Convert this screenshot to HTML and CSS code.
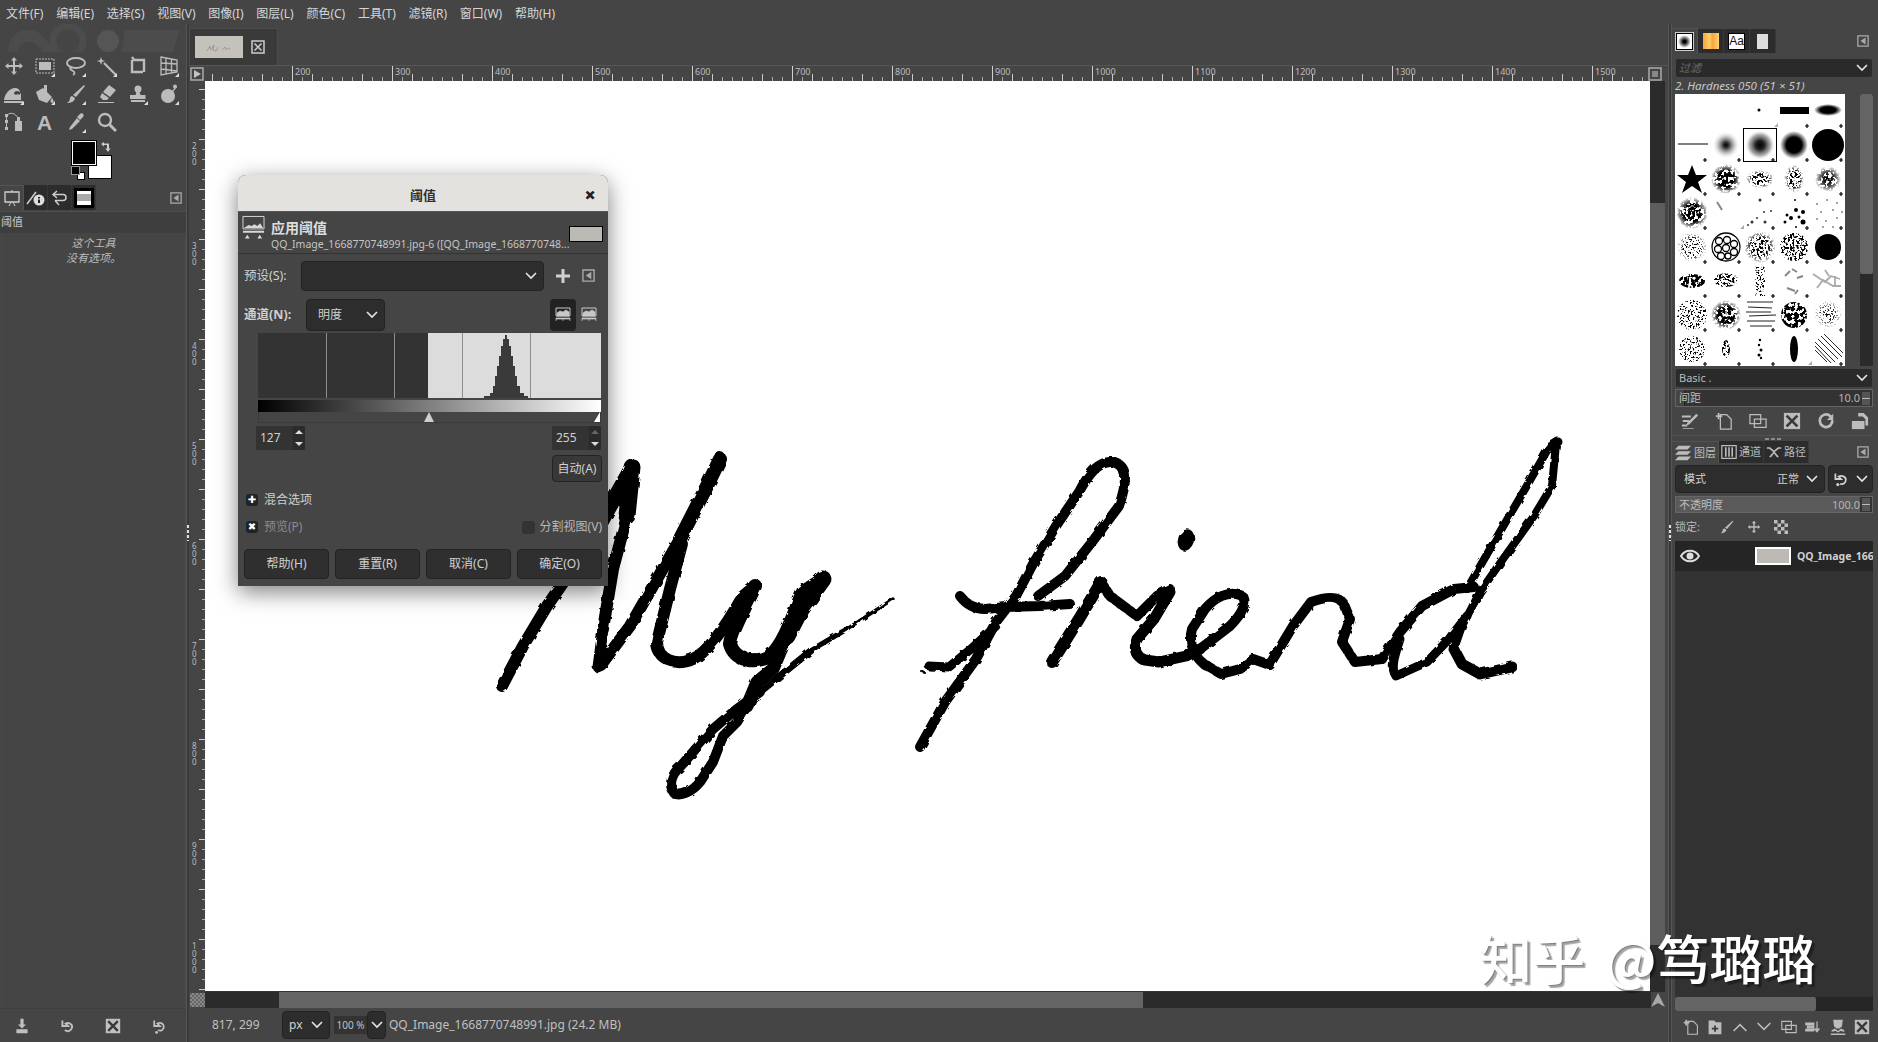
FILE: index.html
```html
<!DOCTYPE html>
<html lang="zh">
<head>
<meta charset="utf-8">
<title>GIMP 阈值</title>
<link rel="stylesheet" href="styles.css">
</head>
<body>
<svg class="defs" width="0" height="0" aria-hidden="true">
  <defs>
    <radialGradient id="soft"><stop offset="0" stop-color="#000"/><stop offset=".2" stop-color="#333"/><stop offset=".55" stop-color="#999" stop-opacity=".7"/><stop offset="1" stop-color="#fff" stop-opacity="0"/></radialGradient>
    <radialGradient id="mid"><stop offset="0" stop-color="#000"/><stop offset=".3" stop-color="#222"/><stop offset=".7" stop-color="#888" stop-opacity=".7"/><stop offset="1" stop-color="#fff" stop-opacity="0"/></radialGradient>
    <radialGradient id="blur"><stop offset="0" stop-color="#000"/><stop offset=".55" stop-color="#000"/><stop offset="1" stop-color="#000" stop-opacity="0"/></radialGradient>
    <filter id="rough"><feTurbulence type="fractalNoise" baseFrequency=".14" numOctaves="2" seed="5"/><feDisplacementMap in="SourceGraphic" scale="3.500"/></filter>
    <filter id="sp1" x="0" y="0" width="1" height="1"><feTurbulence type="fractalNoise" baseFrequency=".45" numOctaves="2" seed="3"/><feColorMatrix values="0 0 0 0 0 0 0 0 0 0 0 0 0 0 0 14 0 0 0 -7"/><feComposite in2="SourceGraphic" operator="in"/></filter>
    <filter id="sp2" x="0" y="0" width="1" height="1"><feTurbulence type="fractalNoise" baseFrequency=".6" numOctaves="2" seed="8"/><feColorMatrix values="0 0 0 0 0 0 0 0 0 0 0 0 0 0 0 14 0 0 0 -7.800"/><feComposite in2="SourceGraphic" operator="in"/></filter>
    <filter id="sp3" x="0" y="0" width="1" height="1"><feTurbulence type="fractalNoise" baseFrequency=".3" numOctaves="2" seed="12"/><feColorMatrix values="0 0 0 0 0 0 0 0 0 0 0 0 0 0 0 14 0 0 0 -6"/><feComposite in2="SourceGraphic" operator="in"/></filter>

    <symbol id="i-move" viewBox="0 0 20 20"><path d="M10 1l3 3.500h-2v4.500h4.500v-2l3.500 3-3.500 3v-2h-4.500v4.500h2l-3 3.500-3-3.500h2v-4.500h-4.500v2l-3.500-3 3.500-3v2h4.500v-4.500h-2z"/></symbol>
    <symbol id="i-rect" viewBox="0 0 20 20"><rect x="1" y="3" width="18" height="14" fill="none" stroke="currentColor" stroke-dasharray="2 1"/><rect x="4" y="6" width="12" height="8"/></symbol>
    <symbol id="i-lasso" viewBox="0 0 20 20"><path d="M10 2c5 0 9 2 9 5s-5 5-9 5-9-2-9-5 4-5 9-5zM5 11c-2 2 0 3 2 4s2 3 0 4" fill="none" stroke="currentColor" stroke-width="1.800"/></symbol>
    <symbol id="i-wand" viewBox="0 0 20 20"><path d="M7 7l12 12" stroke="currentColor" stroke-width="2.200"/><path d="M4 1l1 3 3 1-3 1-1 3-1-3-3-1 3-1z"/></symbol>
    <symbol id="i-crop" viewBox="0 0 20 20"><path d="M4 1l2 3h10v12M4 4v12h11" fill="none" stroke="currentColor" stroke-width="2.400"/></symbol>
    <symbol id="i-grid" viewBox="0 0 20 20"><path d="M2 1l16 3v12L2 19zM7 2v16M12.500 3v14M2 7l16 1M2 13l16 2" fill="none" stroke="currentColor" stroke-width="1.300"/></symbol>
    <symbol id="i-wave" viewBox="0 0 20 20"><path d="M0 16c1-7 6-12 11-12 3 0 5 2 5 4-3-2-6-1-6 2 1 1 3 1 4 0l1 1 2-2v7zM0 17h19v2H0z"/></symbol>
    <symbol id="i-bucket" viewBox="0 0 20 20"><path d="M1 8l7-4 9 9-5 6-8-3zM9 1h3v9H9z"/><path d="M17 14c2 2 2 5 0 5s-2-3 0-5z"/></symbol>
    <symbol id="i-brush" viewBox="0 0 20 20"><path d="M18 1l1 1-9 11-3-2zM6 12l3 2c0 3-4 5-8 5 2-1 3-3 3-5 0-1 1-2 2-2z"/></symbol>
    <symbol id="i-eraser" viewBox="0 0 20 20"><path d="M12 1l7 5-6 7-7-5zM5 9l7 5-2 2H6l-3-3zM1 18h16v1H1z"/></symbol>
    <symbol id="i-stamp" viewBox="0 0 20 20"><circle cx="10" cy="5" r="3.500"/><path d="M8.500 8h3l1 3h5v4H2v-4h5.500zM3 16h14v2H3z"/></symbol>
    <symbol id="i-smudge" viewBox="0 0 20 20"><circle cx="9" cy="12" r="7"/><path d="M13 7l4-5 1 1-4 5z"/><circle cx="16" cy="2.500" r="2"/></symbol>
    <symbol id="i-paths" viewBox="0 0 20 20"><path d="M1 2h3v3H1zM1 8h3v3H1zM1 15h3v3H1zM11 9h7v10h-7zM13 5h3v4h-3z"/><path d="M3 3c4-3 8-2 11 3" fill="none" stroke="currentColor"/><path d="M2.500 5v10" stroke="currentColor"/></symbol>
    <symbol id="i-picker" viewBox="0 0 20 20"><path d="M14 2c2-2 5 1 3 3l-3 3-3-3zM11 6l3 3-8 8-3 1 1-3z"/></symbol>
    <symbol id="i-zoom" viewBox="0 0 20 20"><circle cx="8" cy="8" r="6" fill="none" stroke="currentColor" stroke-width="2.400"/><path d="M12.500 12.500L19 19" stroke="currentColor" stroke-width="3"/></symbol>
    <symbol id="i-config" viewBox="0 0 14 14"><path d="M1 1h12v12H1z" fill="none" stroke="currentColor" stroke-width="1.500"/><path d="M10 3v8L4 7z"/></symbol>
    <symbol id="i-close" viewBox="0 0 14 14"><path d="M1 1h12v12H1z" fill="none" stroke="currentColor" stroke-width="1.500"/><path d="M3.500 3.500l7 7M10.500 3.500l-7 7" stroke="currentColor" stroke-width="1.500"/></symbol>
    <symbol id="i-hist" viewBox="0 0 24 24"><path d="M1 1h22v13H1z" fill="none" stroke="currentColor"/><path d="M2 13l5-3 3 1 3-2 3 2 3-3 3 5zM1 16h22v2H1zM3 24l2.500-4L8 24zM16 24l2.500-4 2.500 4z"/></symbol>
    <symbol id="i-hist2" viewBox="0 0 16 16"><path d="M1 1h14v8H1z" fill="none" stroke="currentColor"/><path d="M2 9V6l3-2 3 1 3-2 3 2v4zM1 11h14v1H1zM1 12v2M8 12v2M15 12v2" stroke="currentColor" stroke-width=".7"/></symbol>
    <symbol id="i-save" viewBox="0 0 20 20"><path d="M8 1h4v7h3l-5 5-5-5h3zM3 14h14v5H3z"/></symbol>
    <symbol id="i-undo" viewBox="0 0 20 20"><path d="M3 3v7h7L7 7c4-2 9 1 8 5s-5 6-9 3" fill="none" stroke="currentColor" stroke-width="2.400"/></symbol>
    <symbol id="i-x" viewBox="0 0 20 20"><path d="M1 1h18v18H1z"/><path d="M4 4l12 12M16 4L4 16" stroke="#3a3a3a" stroke-width="3"/></symbol>
    <symbol id="i-reset" viewBox="0 0 20 20"><path d="M4 3v7h7L8 7c4-2 8 0 8 4s-4 6-7 4" fill="none" stroke="currentColor" stroke-width="2.200"/><circle cx="7" cy="18" r="1.800"/></symbol>
    <symbol id="i-edit" viewBox="0 0 20 20"><path d="M1 4h10v2H1zM2 9h7v2H2zM1 14h6v2H1zM2 18h12v1H2zM17 2l2 2-10 10-3 1 1-3z"/></symbol>
    <symbol id="i-new" viewBox="0 0 20 20"><path d="M6 3h7l5 5v11H6z" fill="none" stroke="currentColor" stroke-width="1.400"/><path d="M4 1v7M1 4.500h7" stroke="currentColor" stroke-width="2"/></symbol>
    <symbol id="i-dup" viewBox="0 0 20 20"><path d="M1 3h12v10H1zM6 8h13v9H6z" fill="none" stroke="currentColor" stroke-width="1.400"/></symbol>
    <symbol id="i-redo" viewBox="0 0 20 20"><path d="M17 9a7 7 0 1 1-3-5l3 3" fill="none" stroke="currentColor" stroke-width="3"/><path d="M18 2v7h-7z"/></symbol>
    <symbol id="i-open" viewBox="0 0 20 20"><path d="M8 1h6l5 5v9h-3V8l-3-3H8z"/><path d="M1 10h14v9H1z"/></symbol>
    <symbol id="i-folder" viewBox="0 0 20 20"><path d="M2 2h7l2 2h7v15H2z"/><path d="M10 8v8M6 12h8" stroke="#3a3a3a" stroke-width="2.200"/></symbol>
    <symbol id="i-up" viewBox="0 0 20 20"><path d="M2 15l8-8 8 8" fill="none" stroke="currentColor" stroke-width="2"/></symbol>
    <symbol id="i-down" viewBox="0 0 20 20"><path d="M2 5l8 8 8-8" fill="none" stroke="currentColor" stroke-width="2"/></symbol>
    <symbol id="i-merge" viewBox="0 0 20 20"><path d="M1 5h10v2H1zM3 9h8v2H3zM1 13h10v2H1zM15 3v12M12 12l3 4 3-4" stroke="currentColor" stroke-width="1.500"/></symbol>
    <symbol id="i-anchor" viewBox="0 0 20 20"><path d="M4 1h12l-1 8-3 3H8L5 9zM2 14l4-2 4 3 4-3 4 2v2l-5-1-3 2-3-2-5 1zM1 18h18v2H1z"/></symbol>
    <symbol id="i-eye" viewBox="0 0 20 14"><path d="M1 7c4-7 14-7 18 0-4 7-14 7-18 0z" fill="none" stroke="currentColor" stroke-width="2"/><circle cx="10" cy="7" r="3.500"/></symbol>
    <symbol id="i-stack" viewBox="0 0 20 20"><path d="M5 2h14l-4 4H1zM5 8h14l-4 4H1zM5 14h14l-4 4H1z"/></symbol>
    <symbol id="i-bars" viewBox="0 0 20 20"><path d="M1 2h18v16H1z" fill="none" stroke="currentColor" stroke-width="1.500"/><path d="M5 4h2v12H5zM9 4h2v12H9zM13 4h2v12h-2z"/></symbol>
    <symbol id="i-path" viewBox="0 0 20 20"><path d="M1 4h4l5 4 5-4h4v2h-3l-5 4 5 6-2 1-4-5-4 5-2-1 5-6-5-4H1z"/></symbol>
    <symbol id="i-reverse" viewBox="0 0 20 20"><path d="M3 3v7h7L7 7c4-2 9 0 9 4s-3 6-7 5" fill="none" stroke="currentColor" stroke-width="2.200"/><circle cx="6" cy="17" r="2"/></symbol>
    <symbol id="i-checks" viewBox="0 0 16 16"><path d="M0 0h4v4H0zM8 0h4v4H8zM4 4h4v4H4zM12 4h4v4h-4zM0 8h4v4H0zM8 8h4v4H8zM4 12h4v4H4zM12 12h4v4h-4z"/></symbol>
    <symbol id="i-chev" viewBox="0 0 12 8"><path d="M1 1l5 5 5-5" fill="none" stroke="currentColor" stroke-width="1.600"/></symbol>
  </defs>
</svg>

<div class="app">
  <nav class="menubar">
    <span>文件(F)</span><span>编辑(E)</span><span>选择(S)</span><span>视图(V)</span><span>图像(I)</span><span>图层(L)</span><span>颜色(C)</span><span>工具(T)</span><span>滤镜(R)</span><span>窗口(W)</span><span>帮助(H)</span>
  </nav>

  <div class="main">
    <aside class="left-dock">
      <div class="wilber">
        <svg viewBox="0 0 186 28" width="186" height="28"><path d="M8 28c0-14 8-22 20-22s18 8 26 22h-12c-2-6-7-10-14-10s-9 4-10 10zM122 28l3-22h54l-6 22z" fill="#4c4c4c"/><circle cx="68" cy="17" r="15" fill="none" stroke="#4c4c4c" stroke-width="7"/><circle cx="108" cy="17" r="11" fill="#555"/></svg>
      </div>
      <div class="tools">
        <div class="tool"><svg class="ic20"><use href="#i-move"/></svg></div>
        <div class="tool more"><svg class="ic20"><use href="#i-rect"/></svg></div>
        <div class="tool more"><svg class="ic20"><use href="#i-lasso"/></svg></div>
        <div class="tool more"><svg class="ic20"><use href="#i-wand"/></svg></div>
        <div class="tool"><svg class="ic20"><use href="#i-crop"/></svg></div>
        <div class="tool more"><svg class="ic20"><use href="#i-grid"/></svg></div>
        <div class="tool more"><svg class="ic20"><use href="#i-wave"/></svg></div>
        <div class="tool more"><svg class="ic20"><use href="#i-bucket"/></svg></div>
        <div class="tool more"><svg class="ic20"><use href="#i-brush"/></svg></div>
        <div class="tool"><svg class="ic20"><use href="#i-eraser"/></svg></div>
        <div class="tool more"><svg class="ic20"><use href="#i-stamp"/></svg></div>
        <div class="tool more"><svg class="ic20"><use href="#i-smudge"/></svg></div>
        <div class="tool"><svg class="ic20"><use href="#i-paths"/></svg></div>
        <div class="tool tool-text">A</div>
        <div class="tool more"><svg class="ic20"><use href="#i-picker"/></svg></div>
        <div class="tool"><svg class="ic20"><use href="#i-zoom"/></svg></div>
      </div>
      <div class="colors">
        <span class="bg-swatch"></span><span class="fg-swatch"></span>
        <span class="mini-bg"></span><span class="mini-fg"></span>
        <svg class="swap" viewBox="0 0 12 12" width="12" height="12"><path d="M1 3l3-2v1.500h5v5H10.500L8 11 5.500 7.500H7V4H4v1.500z"/></svg>
      </div>
      <div class="dock-tabs">
        <div class="dtab active">
          <svg viewBox="0 0 18 16" width="18" height="16"><path d="M2 2h14v10H2z" fill="none" stroke="#cfcfcf" stroke-width="1.300"/><path d="M9 0v2M6 16l2-4M12 16l-2-4" stroke="#cfcfcf"/></svg>
        </div>
        <div class="dtab-group">
          <div class="dtab"><svg viewBox="0 0 20 16" width="20" height="16"><path d="M1 14L10 2" stroke="#ccc" stroke-width="1.500"/><circle cx="13" cy="10" r="5.500" fill="#ddd"/><path d="M12 7h2v1.500h-2zM12 9.500h2V13h-2z" fill="#222"/></svg></div>
          <div class="dtab"><svg viewBox="0 0 18 16" width="18" height="16"><path d="M6 1L2 4.500 6 8M2 4.500h10c4 0 4 6 0 6H4M8 15l-4-4.500" fill="none" stroke="#ccc" stroke-width="1.500"/></svg></div>
          <div class="dtab"><span class="img-thumb"></span></div>
        </div>
        <svg class="cfg"><use href="#i-config"/></svg>
      </div>
      <div class="panel-title">阈值</div>
      <div class="tool-opts">这个工具<br>没有选项。</div>
      <div class="dock-foot">
        <svg class="ic16"><use href="#i-save"/></svg>
        <svg class="ic16"><use href="#i-undo"/></svg>
        <svg class="ic16"><use href="#i-x"/></svg>
        <svg class="ic16"><use href="#i-reset"/></svg>
      </div>
    </aside>
    <div class="sash"><i></i></div>

    <section class="center">
      <div class="tabs">
        <div class="image-tab">
          <span class="tab-thumb"><svg viewBox="0 0 48 22" width="48" height="22"><path d="M12 15l3-5 1 4 3-5-1 5 3 1 2-4M27 14l3-3 1 3 2-2 2 1" fill="none" stroke="#8d8a86" stroke-width=".7"/></svg></span>
          <svg class="tab-close"><use href="#i-close"/></svg>
        </div>
      </div>
      <div class="ruler-row">
        <div class="corner"><svg viewBox="0 0 14 14" width="14" height="14"><path d="M1 1h12v12H1z" fill="none" stroke="#aaa" stroke-width="1.500"/><path d="M4 3v8l7-4z" fill="#c4c4c4"/></svg></div>
        <div class="hruler">
          <span class="lead"></span>
          <span>200</span><span>300</span><span>400</span><span>500</span><span>600</span><span>700</span><span>800</span><span>900</span><span>1000</span><span>1100</span><span>1200</span><span>1300</span><span>1400</span><span>1500</span>
        </div>
        <div class="corner-r"><svg viewBox="0 0 14 14" width="14" height="14"><path d="M1 1h12v12H1z" fill="none" stroke="#aaa" stroke-width="1.500"/><path d="M4 4h6v6H4z" fill="#888"/></svg></div>
      </div>
      <div class="canvas-row">
        <div class="vruler">
          <span class="lead"></span>
          <span>2<br>0<br>0</span><span>3<br>0<br>0</span><span>4<br>0<br>0</span><span>5<br>0<br>0</span><span>6<br>0<br>0</span><span>7<br>0<br>0</span><span>8<br>0<br>0</span><span>9<br>0<br>0</span><span>1<br>0<br>0<br>0</span>
        </div>
        <div class="canvas">
          <svg class="ink" viewBox="205 82 1445 910" role="img" aria-label="手写笔迹 My friend">
            <g fill="none" stroke="#000" stroke-linecap="round" stroke-linejoin="round" filter="url(#rough)">
              <!-- M -->
              <path stroke-width="12" d="M502 687L523 647L547 607L567 578"/>
              <path stroke-width="15" d="M567 578L600 525L632 468"/>
              <path stroke-width="17" d="M632 468L627 517"/>
              <path stroke-width="12" d="M627 517L613 570L603 630"/>
              <path stroke-width="11" d="M603 630L598 668"/>
              <path stroke-width="12" d="M601 666L630 627L657 580L680 540"/>
              <path stroke-width="14" d="M680 540L707 487L720 460"/>
              <path stroke-width="12" d="M682 545L670 590L657 643C657 660 675 668 693 660C710 652 730 620 743 597L755 587"/>
              <!-- y -->
              <path stroke-width="14" d="M755 587C745 610 732 630 730 645C735 662 755 665 770 657C785 645 795 610 803 593L823 580"/>
              <path stroke-width="17" d="M823 580L800 612L787 637"/>
              <path stroke-width="13" d="M787 637L773 670L757 683L747 707"/>
              <path stroke-width="10" d="M747 707L737 723L723 737L713 763L700 783C692 793 680 798 674 794C668 785 672 775 680 768L693 753L713 730L733 713L760 693"/>
              <path stroke-width="7" d="M760 693L813 650"/>
              <path stroke-width="5" d="M813 650L847 630"/>
              <path stroke-width="3.500" d="M847 630L893 600"/>
              <!-- f -->
              <path stroke-width="10" d="M920 748L945 703L976 660L996 623"/>
              <path stroke-width="10" d="M996 623L1016 597L1034 563L1056 527L1079 493C1090 472 1100 462 1112 463C1128 466 1128 480 1119 507L1092 543L1065 577L1038 597"/>
              <path stroke-width="10" d="M960 597C966 605 974 610 985 610L1007 608L1040 607L1070 605"/>
              <path stroke-width="9" d="M929 667L949 668L971 650L996 627"/>
              <!-- r -->
              <path stroke-width="12" d="M1052 663L1079 620L1101 583"/>
              <path stroke-width="10" d="M1101 583L1110 597L1137 617L1157 597L1170 590"/>
              <!-- i -->
              <path stroke-width="11" d="M1170 593L1154 620L1137 640C1133 652 1137 658 1145 661L1159 663L1186 657L1200 650"/>
              <!-- e -->
              <path stroke-width="10" d="M1200 650L1230 627C1242 615 1250 600 1240 596C1228 592 1215 598 1205 610L1192 630C1188 645 1195 658 1204 665L1221 675L1240 670L1253 660L1270 666"/>
              <!-- n -->
              <path stroke-width="10" d="M1270 665L1293 627L1311 603C1325 598 1338 596 1344 605L1350 620L1342 643L1355 663L1382 660"/>
              <!-- d -->
              <path stroke-width="10" d="M1382 660L1400 633L1422 607L1454 590L1474 588"/>
              <path stroke-width="9" d="M1400 640C1395 655 1390 670 1396 677L1427 663L1449 640L1467 617"/>
              <path stroke-width="8" d="M1467 590L1494 543L1525 490L1548 450"/>
              <path stroke-width="9" d="M1550 448L1558 443"/>
              <path stroke-width="8" d="M1556 445L1552 487L1534 517L1503 560L1480 593L1462 627L1454 650"/>
              <path stroke-width="11" d="M1454 650L1462 665L1480 675L1512 668"/>
              <ellipse cx="1186" cy="541" rx="8" ry="11" fill="#000" stroke="none" transform="rotate(18 1186 541)"/>
              <path stroke-width="2" d="M921 672l4 2"/>
            </g>
          </svg>
          <div class="watermark"><span>知乎 @笃璐璐</span></div>
        </div>
        <div class="vscroll"><span class="vthumb"></span></div>
      </div>
      <div class="hscroll-row">
        <div class="qmask"></div>
        <div class="hscroll"><span class="hthumb"></span></div>
        <svg class="nav" viewBox="0 0 16 16" width="16" height="16"><path d="M8 1l7 14-7-4-7 4z" fill="#a8a8a8"/></svg>
      </div>
      <div class="status">
        <span class="coords">817, 299</span>
        <div class="combo c-unit"><span>px</span><svg class="chev"><use href="#i-chev"/></svg></div>
        <span class="zoom-val">100 %</span>
        <div class="combo c-zoom"><svg class="chev"><use href="#i-chev"/></svg></div>
        <span class="status-name">QQ_Image_1668770748991.jpg (24.2 MB)</span>
      </div>
    </section>
    <div class="sash sash-r"><i></i></div>

    <aside class="right-dock">
      <div class="dock-tabs r">
        <div class="dtab active"><span class="tab-brush"><i></i></span></div>
        <div class="dtab-group">
          <div class="dtab"><span class="tab-grad"></span></div>
          <div class="dtab"><span class="tab-font">Aa</span></div>
          <div class="dtab"><span class="tab-doc"></span></div>
        </div>
        <svg class="cfg"><use href="#i-config"/></svg>
      </div>
      <div class="filter">过滤<svg class="chev"><use href="#i-chev"/></svg></div>
      <div class="brush-name">2. Hardness 050 (51 × 51)</div>
      <div class="brush-wrap">
        <svg class="brushes" viewBox="0 0 170 272" width="170" height="272" role="img" aria-label="笔刷">
          <!-- row 0 -->
          <circle cx="84" cy="16" r="1.500"/>
          <rect x="105" y="13" width="29" height="7"/>
          <ellipse cx="153" cy="16" rx="14" ry="6" fill="url(#blur)"/>
          <!-- row 1 -->
          <path d="M3 50h30" stroke="#000"/>
          <circle cx="51" cy="51" r="14" fill="url(#soft)"/>
          <circle cx="85" cy="51" r="15" fill="url(#mid)"/>
          <circle cx="119" cy="51" r="14" fill="url(#blur)"/>
          <circle cx="153" cy="51" r="16"/>
          <rect x="68.500" y="34.500" width="33" height="33" fill="none" stroke="#000"/>
          <!-- row 2 -->
          <path d="M17 71l4 10 11 0-9 7 4 11-10-7-10 7 4-11-9-7 11 0z"/>
          <circle cx="51" cy="85" r="15" fill="url(#blur)" filter="url(#sp3)"/>
          <ellipse cx="85" cy="85" rx="14" ry="9" fill="url(#blur)" filter="url(#sp1)"/>
          <ellipse cx="119" cy="85" rx="10" ry="14" fill="url(#blur)" filter="url(#sp1)"/>
          <circle cx="153" cy="85" r="13" fill="url(#soft)" filter="url(#sp3)"/>
          <!-- row 3 -->
          <circle cx="17" cy="119" r="16" fill="url(#blur)" filter="url(#sp3)"/>
          <path d="M42 108l5 8" stroke="#888" stroke-width="2"/>
          <g fill="#333"><circle cx="85" cy="106" r="1.500"/><circle cx="89" cy="118" r="1"/><circle cx="96" cy="117" r="1"/><circle cx="82" cy="124" r="1"/><circle cx="77" cy="128" r="1.500"/><circle cx="90" cy="128" r="1.500"/><circle cx="73" cy="131" r="1"/></g>
          <g><circle cx="120" cy="106" r="1"/><circle cx="121" cy="116" r="2"/><circle cx="128" cy="118" r="2"/><circle cx="112" cy="121" r="1.500"/><circle cx="116" cy="124" r="2"/><circle cx="124" cy="123" r="1.500"/><circle cx="128" cy="128" r="2.500"/><circle cx="121" cy="133" r="1"/><circle cx="110" cy="128" r="1.500"/></g>
          <g><circle cx="142" cy="110" r=".7"/><circle cx="152" cy="106" r=".7"/><circle cx="162" cy="109" r=".7"/><circle cx="146" cy="118" r=".7"/><circle cx="158" cy="116" r=".7"/><circle cx="167" cy="118" r=".7"/><circle cx="142" cy="125" r=".7"/><circle cx="151" cy="127" r=".7"/><circle cx="162" cy="124" r=".7"/><circle cx="148" cy="133" r=".7"/><circle cx="158" cy="133" r=".7"/></g>
          <!-- row 4 -->
          <circle cx="17" cy="153" r="15" fill="url(#blur)" filter="url(#sp2)"/>
          <g fill="none" stroke="#000" stroke-width="1.300"><circle cx="51" cy="153" r="14"/><circle cx="44" cy="147" r="3.500"/><circle cx="52" cy="146" r="3.500"/><circle cx="59" cy="150" r="3.500"/><circle cx="43" cy="155" r="3.500"/><circle cx="51" cy="154" r="3.500"/><circle cx="59" cy="158" r="3.500"/><circle cx="46" cy="162" r="3.500"/><circle cx="53" cy="162" r="3"/></g>
          <circle cx="85" cy="153" r="16" fill="url(#blur)" filter="url(#sp1)"/>
          <circle cx="119" cy="153" r="14" filter="url(#sp1)"/>
          <circle cx="153" cy="153" r="13"/><ellipse cx="153" cy="158" rx="12" ry="7" fill="#fff" filter="url(#sp1)"/>
          <!-- row 5 -->
          <ellipse cx="17" cy="187" rx="13" ry="7" filter="url(#sp3)"/>
          <ellipse cx="51" cy="186" rx="12" ry="7" fill="#555" filter="url(#sp1)"/>
          <rect x="80" y="172" width="10" height="30" fill="#555" filter="url(#sp2)"/>
          <g stroke="#888" stroke-width="2"><path d="M110 182l5-5M122 178l-5-3M128 182l-6 2M112 194l8 3M123 196l-3 4"/></g>
          <g stroke="#aaa" stroke-width="1.800" fill="none"><path d="M138 180l12 8 6-6 9 3M142 194l6-8 10 6 8 0M150 176l4 6M160 182v10"/></g>
          <!-- row 6 -->
          <circle cx="17" cy="221" r="15" fill="#444" filter="url(#sp2)"/>
          <circle cx="51" cy="221" r="15" fill="url(#blur)" filter="url(#sp3)"/>
          <g stroke="#222"><path d="M72 208h26M73 213l24 1M71 218h25M74 222l27-1M72 227h28M75 232h22"/></g>
          <circle cx="119" cy="221" r="13" filter="url(#sp3)"/>
          <circle cx="153" cy="220" r="14" fill="url(#soft)" filter="url(#sp2)"/>
          <!-- row 7 -->
          <circle cx="17" cy="255" r="13" fill="#777" filter="url(#sp2)"/>
          <ellipse cx="51" cy="255" rx="4" ry="9" fill="#666" filter="url(#sp1)"/>
          <g><circle cx="85" cy="246" r="1.200"/><circle cx="84" cy="251" r="1.200"/><circle cx="86" cy="256" r="1.500"/><circle cx="84" cy="261" r="1.500"/><circle cx="86" cy="264" r="1.200"/></g>
          <ellipse cx="119" cy="255" rx="4" ry="13"/>
          <g stroke="#111" stroke-width=".9"><path d="M140 248l20 20M143 245l20 20M146 242l21 21M149 240l19 19M140 252l16 17M140 256l12 12"/></g>
          <!-- plus marks -->
          <g class="plus"><path d="M132 30v4M130 32h4M166 30v4M164 32h4"/><path d="M30 64v4M28 66h4M64 64v4M62 66h4M98 64v4M96 66h4M132 64v4M130 66h4M166 64v4M164 66h4"/><path d="M30 98v4M28 100h4M64 98v4M62 100h4M98 98v4M96 100h4M132 98v4M130 100h4M166 98v4M164 100h4"/><path d="M30 132v4M28 134h4M98 132v4M96 134h4M132 132v4M130 134h4M166 132v4M164 134h4"/><path d="M30 166v4M28 168h4M64 166v4M62 168h4M98 166v4M96 168h4M132 166v4M130 168h4M166 166v4M164 168h4"/><path d="M30 200v4M28 202h4M64 200v4M62 202h4M98 200v4M96 202h4M132 200v4M130 202h4M166 200v4M164 202h4"/><path d="M30 234v4M28 236h4M64 234v4M62 236h4M98 234v4M96 236h4M132 234v4M130 236h4M166 234v4M164 236h4"/><path d="M30 268v4M28 270h4M64 268v4M62 270h4M98 268v4M96 270h4M166 268v4M164 270h4"/></g>
          <path d="M99 33l4-4v4zM65 135l4-4v4zM133 271l4-4v4z" fill="#aab"/>
        </svg>
        <div class="brush-scroll"><span></span></div>
      </div>
      <div class="filter basic">Basic .<svg class="chev"><use href="#i-chev"/></svg></div>
      <div class="slider spacing"><span>间距</span><em>10.0</em><b class="updown"></b></div>
      <div class="icon-row">
        <svg class="ic18"><use href="#i-edit"/></svg>
        <svg class="ic18"><use href="#i-new"/></svg>
        <svg class="ic18"><use href="#i-dup"/></svg>
        <svg class="ic18"><use href="#i-x"/></svg>
        <svg class="ic18"><use href="#i-redo"/></svg>
        <svg class="ic18"><use href="#i-open"/></svg>
      </div>
      <div class="grip"><i></i><i></i><i></i></div>
      <div class="dock-tabs r2">
        <div class="dtab active wide"><svg class="ic18"><use href="#i-stack"/></svg><span>图层</span></div>
        <div class="dtab-group">
          <div class="dtab wide"><svg class="ic16"><use href="#i-bars"/></svg><span>通道</span></div>
          <div class="dtab wide"><svg class="ic16"><use href="#i-path"/></svg><span>路径</span></div>
        </div>
        <svg class="cfg"><use href="#i-config"/></svg>
      </div>
      <div class="mode-row">
        <div class="combo mode"><span>模式</span><span class="mode-val">正常</span><svg class="chev"><use href="#i-chev"/></svg></div>
        <div class="combo rev"><svg class="ic16"><use href="#i-reverse"/></svg><svg class="chev"><use href="#i-chev"/></svg></div>
      </div>
      <div class="slider opacity"><span>不透明度</span><em>100.0</em><b class="updown"></b></div>
      <div class="lock-row">
        <span>锁定:</span>
        <svg class="ic14"><use href="#i-brush"/></svg>
        <svg class="ic14"><use href="#i-move"/></svg>
        <svg class="ic14"><use href="#i-checks"/></svg>
      </div>
      <div class="layers">
        <div class="layer">
          <svg class="eye"><use href="#i-eye"/></svg>
          <span class="layer-thumb"></span>
          <span class="layer-name">QQ_Image_1668</span>
        </div>
      </div>
      <div class="rhscroll"><span></span></div>
      <div class="icon-row foot">
        <svg class="ic16"><use href="#i-new"/></svg>
        <svg class="ic16"><use href="#i-folder"/></svg>
        <svg class="ic16"><use href="#i-up"/></svg>
        <svg class="ic16"><use href="#i-down"/></svg>
        <svg class="ic16"><use href="#i-dup"/></svg>
        <svg class="ic16"><use href="#i-merge"/></svg>
        <svg class="ic16"><use href="#i-anchor"/></svg>
        <svg class="ic16"><use href="#i-x"/></svg>
      </div>
    </aside>
  </div>

  <div class="dialog">
    <header class="dlg-title"><span>阈值</span><b>×</b></header>
    <div class="dlg-head">
      <svg class="dlg-ic"><use href="#i-hist"/></svg>
      <div class="dlg-heading">
        <strong>应用阈值</strong>
        <small>QQ_Image_1668770748991.jpg-6 ([QQ_Image_1668770748...</small>
      </div>
      <span class="dlg-thumb"></span>
    </div>
    <div class="dlg-row presets">
      <label>预设(S):</label>
      <div class="combo preset-combo"><svg class="chev"><use href="#i-chev"/></svg></div>
      <svg class="plus-ic" viewBox="0 0 14 14" width="14" height="14"><path d="M5.500 0h3v5.500H14v3H8.500V14h-3V8.500H0v-3h5.500z"/></svg>
      <svg class="cfg dlg-cfg"><use href="#i-config"/></svg>
    </div>
    <div class="dlg-row channel">
      <label>通道(N):</label>
      <div class="combo chan-combo"><span>明度</span><svg class="chev"><use href="#i-chev"/></svg></div>
      <div class="hist-btns">
        <span class="hbtn on"><svg class="ic16"><use href="#i-hist2"/></svg></span>
        <span class="hbtn"><svg class="ic16"><use href="#i-hist2"/></svg></span>
      </div>
    </div>
    <div class="hist-wrap">
      <svg class="hist" viewBox="0 0 343 65" width="343" height="65" role="img" aria-label="直方图">
        <rect width="343" height="65" fill="#dcdcdc"/>
        <rect width="170" height="65" fill="#333"/>
        <path d="M68.500 0v65M136.500 0v65M204.500 0v65M272.500 0v65" stroke="#8e8e8e"/>
        <path d="M226 65V63H232V60H235V53H237V43H239V33H241V23H243V13H245V6H247V2H249V6H251V13H253V23H255V33H257V43H259V53H262V60H266V63H270V65z" fill="#3a3a3a"/>
      </svg>
      <div class="ramp"></div>
      <div class="handles">
        <svg class="h1" viewBox="0 0 10 10" width="10" height="10"><path d="M5 0l5 10H0z" fill="#ccc"/><path d="M5 2l3.800 7.500H1.200z"/></svg>
        <svg class="h2" viewBox="0 0 6 10" width="6" height="10"><path d="M6 0v10H0z" fill="#fff"/></svg>
      </div>
    </div>
    <div class="spins">
      <div class="spin"><span>127</span><i class="arrows"></i></div>
      <div class="spin"><span>255</span><i class="arrows off"></i></div>
    </div>
    <div class="auto-row"><button class="btn auto">自动(A)</button></div>
    <div class="check-row first"><span class="cb">✚</span><span>混合选项</span></div>
    <div class="check-row second">
      <span class="cb">✖</span><span class="dim">预览(P)</span>
      <span class="cb empty"></span><span class="dim split">分割视图(V)</span>
    </div>
    <div class="actions">
      <button class="btn">帮助(H)</button>
      <button class="btn">重置(R)</button>
      <button class="btn">取消(C)</button>
      <button class="btn">确定(O)</button>
    </div>
  </div>
</div>
</body>
</html>
```
FILE: styles.css
```css
* { box-sizing: border-box; }
html, body { margin: 0; height: 100%; }
body { background: #454545; overflow: hidden; color: #c8c8c8; font: 11px/14px "Noto Sans", "Noto Sans CJK SC", sans-serif; }
.defs { position: absolute; }
svg { display: block; fill: currentColor; }
button { font: inherit; color: inherit; }

.app { position: relative; width: 1878px; height: 1042px; display: flex; flex-direction: column; }

.menubar { height: 24px; flex: none; display: flex; align-items: center; padding: 4px 0 0 6px; gap: 12.700px; font-size: 12px; color: #d6d6d6; }
.main { flex: 1; display: flex; min-height: 0; }

/* left dock */
.left-dock { width: 186px; flex: none; display: flex; flex-direction: column; color: #bcbcbc; }
.wilber { height: 28px; }
.tools { display: grid; grid-template-columns: repeat(6, 31px); grid-auto-rows: 28px; margin-left: -2px; }
.tool { position: relative; display: flex; align-items: center; justify-content: center; }
.tool.more::after { content: ""; position: absolute; right: 5px; bottom: 3px; border: 2px solid transparent; border-right-color: #ddd; border-bottom-color: #ddd; }
.tool-text { font: bold 21px/1 "Liberation Sans", sans-serif; }
.ic20 { width: 20px; height: 20px; }
.ic18 { width: 18px; height: 18px; }
.ic16 { width: 16px; height: 16px; }
.ic14 { width: 14px; height: 14px; }

.colors { position: relative; height: 49px; }
.colors span { position: absolute; display: block; border: 1px solid #000; }
.fg-swatch { left: 72px; top: 5px; width: 24px; height: 24px; background: #000; outline: 1px solid #000; outline-offset: 0; border-color: #fff !important; }
.bg-swatch { left: 88px; top: 19px; width: 24px; height: 24px; background: #fff; }
.mini-fg { left: 72px; top: 31px; width: 7px; height: 7px; background: #000; outline: 1px solid #999; }
.mini-bg { left: 77px; top: 36px; width: 8px; height: 8px; background: #fff; }
.swap { position: absolute; left: 100px; top: 5px; color: #ccc; }

.dock-tabs { display: flex; align-items: center; height: 25px; position: relative; }
.dtab { height: 25px; display: flex; align-items: center; justify-content: center; width: 24px; }
.dtab.active { border: 1px solid #525252; border-bottom: 0; border-left: 0; }
.dtab-group { display: flex; background: #2c2c2c; height: 25px; }
.dtab-group .dtab { border-right: 1px solid #383838; }
.img-thumb { display: block; width: 18px; height: 18px; border: 2px solid #000; outline: 1px solid #000; background: linear-gradient(#fff 0 20%, #aaa 20% 75%, #fff 75%); }
.cfg { width: 12px; height: 12px; margin-left: auto; margin-right: 4px; color: #aaa; }
.panel-title { height: 22px; margin-top: 1px; line-height: 19px; padding-left: 1px; font-size: 11px; background: #3e3e3e; border-top: 1px solid #4e4e4e; color: #c6c6c6; }
.tool-opts { flex: 1; text-align: center; font-style: italic; font-size: 11px; line-height: 15px; padding-top: 2px; color: #bdbdbd; border-left: 1px solid #4a4a4a; border-right: 1px solid #4a4a4a; margin-left: 1px; }
.dock-foot { height: 34px; flex: none; display: flex; justify-content: space-between; align-items: center; padding: 0 19px 0 14px; border-top: 1px solid #3e3e3e; color: #c0c0c0; }

.sash { width: 3px; flex: none; background: #3a3a3a; border-left: 1px solid #555; display: flex; align-items: center; }
.sash i { display: block; width: 2px; height: 16px; background: repeating-linear-gradient(#e0e0e0 0 3px, transparent 3px 5px); }
.sash-r { width: 4px; border-right: 1px solid #555; }

/* centre */
.center { flex: 1; min-width: 0; display: flex; flex-direction: column; }
.tabs { height: 42px; flex: none; padding-top: 4px; border-bottom: 1px solid #565656; }
.image-tab { width: 89px; height: 37px; display: flex; align-items: center; padding-left: 5px; background: #3a3a3a; border: 1px solid #4c4c4c; border-bottom: 0; }
.tab-thumb { width: 48px; height: 22px; background: #c5c2bc; }
.tab-close { width: 14px; height: 14px; margin-left: 8px; color: #ccc; }

.ruler-row { height: 15px; display: flex; flex: none; padding-left: 1px; }
.corner { width: 15px; flex: none; padding-top: 1px; }
.hruler { flex: 1; display: flex; font-size: 9px; line-height: 11px; color: #bdbdbd; overflow: hidden; background:
  linear-gradient(90deg, #ccc 1px, transparent 1px) 7px 100% / 50px 7px repeat-x,
  linear-gradient(90deg, #aaa 1px, transparent 1px) 7px 100% / 10px 4px repeat-x; }
.hruler .lead { flex: 0 0 87px; border: 0; padding: 0; }
.hruler span { flex: 0 0 100px; padding-left: 2px; border-left: 1px solid #d0d0d0; }
.corner-r { width: 18px; flex: none; padding: 1px 0 0 1px; margin-right: 3px; }

.canvas-row { flex: 1; min-height: 0; display: flex; padding-left: 1px; }
.vruler { width: 15px; flex: none; overflow: hidden; font-size: 8px; line-height: 8px; color: #bdbdbd; background:
  linear-gradient(#ccc 1px, transparent 1px) 100% 8px / 6px 50px repeat-y,
  linear-gradient(#aaa 1px, transparent 1px) 100% 8px / 3px 10px repeat-y; }
.vruler span { display: block; height: 100px; padding: 3px 0 0 2px; }
.vruler .lead { height: 58px; padding: 0; }
.canvas { position: relative; flex: 1; min-width: 0; background: #fff; border-bottom: 1px solid #333; }
.ink { position: absolute; inset: 0; width: 100%; height: 100%; }
.watermark { position: absolute; left: 1274px; top: 846px; white-space: nowrap; font: 500 53px/60px "Noto Sans CJK SC", sans-serif; word-spacing: 8px; color: #fff; text-shadow: 3px 3px 1px rgba(0,0,0,.35), 1px 1px 1px rgba(0,0,0,.25); }
.vscroll { width: 15px; flex: none; background: #2b2b2b; padding-top: 122px; margin-right: 3px; }
.vthumb { display: block; width: 15px; height: 742px; background: #5e5e5e; }

.hscroll-row { height: 16px; flex: none; display: flex; padding-left: 1px; }
.qmask { width: 15px; flex: none; margin: 1px 0; background: repeating-conic-gradient(#888 0 25%, #666 0 50%) 0 0 / 4px 4px; }
.hscroll { flex: 1; background: #2b2b2b; padding-left: 74px; }
.hthumb { display: block; width: 864px; height: 16px; background: #646464; }
.nav { flex: none; margin-left: -1px; margin-right: 2px; width: 16px; height: 16px; }

.status { height: 34px; flex: none; display: flex; align-items: center; padding-left: 23px; font-size: 12px; color: #c0c0c0; }
.coords { width: 70px; }
.combo { display: flex; align-items: center; background: #2d2d2d; border: 1px solid #232323; border-radius: 4px; color: #d0d0d0; }
.chev { width: 12px; height: 8px; flex: none; margin-left: auto; color: #e6e6e6; }
.c-unit { width: 48px; height: 28px; padding: 0 6px; }
.zoom-val { width: 33px; height: 18px; margin-left: 4px; line-height: 18px; font-size: 10px; background: #333; text-align: center; }
.c-zoom { width: 19px; height: 28px; padding: 0 3px; }
.status-name { margin-left: 3px; white-space: nowrap; }

/* right dock */
.right-dock { width: 206px; flex: none; display: flex; flex-direction: column; padding: 4px 5px 0 0; color: #bcbcbc; }
.dock-tabs.r { height: 26px; }
.dock-tabs.r .dtab { width: 26px; height: 26px; }
.dock-tabs.r .dtab-group { height: 24px; }
.dock-tabs.r .dtab-group .dtab { height: 24px; }
.tab-brush { position: relative; display: block; width: 17px; height: 17px; background: #fff; border: 1px solid #000; outline: 1px solid #ccc; }
.tab-brush i { position: absolute; inset: 1px; border-radius: 50%; background: radial-gradient(#000 15%, transparent 70%); }
.tab-grad { width: 16px; height: 16px; background: linear-gradient(90deg, #f7a63a, #ffcd6a 40%, #f7a63a 60%, #ffd27c); }
.tab-font { width: 17px; height: 17px; background: #fff; border: 1px solid #000; color: #111; font: 12px/15px "Liberation Sans", sans-serif; text-align: center; }
.tab-doc { width: 11px; height: 15px; background: #ddd; }
.filter { height: 18px; margin: 5px 1px 0 4px; display: flex; align-items: center; padding: 0 4px 0 3px; background: #2a2a2a; border-radius: 2px; font-style: italic; color: #6a6a6a; font-size: 11px; }
.brush-name { height: 17px; margin-left: 3px; font-style: italic; line-height: 18px; font-size: 11.500px; color: #c8c8c8; white-space: nowrap; }
.brush-wrap { display: flex; height: 272px; margin-left: 3px; }
.brushes { flex: none; background: #fff; color: #000; }
.plus path { stroke: #000; stroke-width: 1.200; fill: none; }
.brush-scroll { width: 15px; margin-left: 15px; background: #2a2a2a; }
.brush-scroll span { display: block; height: 180px; background: #646464; border-radius: 2px; }
.filter.basic { height: 18px; margin-top: 3px; font-style: normal; color: #bcbcbc; }
.slider { display: flex; align-items: center; position: relative; height: 18px; margin: 2px 0 0 3px; padding: 0 2px 0 3px; background: #3a3a3a; border: 1px solid #666; font-size: 11px; overflow: hidden; }
.slider span { position: relative; }
.slider em { margin-left: auto; font-style: normal; color: #b5b5b5; }
.updown { width: 8px; height: 13px; margin-left: 2px; background: linear-gradient(#bbb, #bbb) 50% 50% / 8px 1px no-repeat, #555; }
.spacing { background: linear-gradient(90deg, #454545 8px, #222 8px, #222 9px, #333 9px); }
.icon-row { height: 28px; margin: 0 4px 0 9px; display: flex; align-items: center; justify-content: space-between; }
.grip { height: 6px; display: flex; align-items: center; justify-content: center; gap: 2px; padding-top: 1px; border-top: 1px solid #535353; }
.grip i { width: 4px; height: 2px; background: #8a8a8a; }
.dock-tabs.r2 { height: 22px; }
.dock-tabs.r2 .dtab { width: 48px; height: 22px; gap: 2px; font-size: 11px; }
.dock-tabs.r2 .dtab.active { width: 47px; }
.dock-tabs.r2 .dtab-group { height: 22px; }
.dock-tabs.r2 .dtab-group .dtab { width: 45px; height: 22px; }
.mode-row { display: flex; gap: 3px; margin: 2px 0 0 3px; height: 28px; }
.mode { flex: 1; padding: 0 6px 0 8px; font-size: 11px; }
.mode-val { margin-left: auto; margin-right: 7px; }
.mode .chev { margin-left: 0; }
.rev { width: 45px; padding: 0 4px; gap: 3px; }
.opacity { margin-top: 3px; height: 17px; background: linear-gradient(#5a5a5a,#5a5a5a) 0 0 / 94% 100% no-repeat, #333; }
.lock-row { display: flex; align-items: center; height: 28px; padding-left: 3px; gap: 13px; }
.lock-row span { width: auto; margin-right: 7px; font-size: 11px; white-space: nowrap; }
.layers { flex: 1; min-height: 0; background: #323232; margin-left: 3px; }
.layer { height: 30px; display: flex; align-items: center; background: #252525; overflow: hidden; }
.eye { width: 20px; height: 14px; margin-left: 5px; flex: none; color: #ddd; }
.layer-thumb { width: 36px; height: 18px; flex: none; margin-left: 55px; background: #bdbab6; border: 2px solid #fff; }
.layer-name { margin-left: 6px; font-weight: 700; font-size: 10.500px; color: #d0d0d0; white-space: nowrap; }
.rhscroll { height: 14px; background: #262626; margin-left: 3px; }
.rhscroll span { display: block; width: 141px; height: 14px; background: #646464; border-radius: 2px; }
.icon-row.foot { height: 31px; margin: 0 3px 0 11px; flex: none; }

/* dialog */
.dialog { position: absolute; left: 238px; top: 175px; width: 370px; height: 411px; display: flex; flex-direction: column; background: #454545; border-radius: 8px 8px 0 0; box-shadow: 0 6px 22px rgba(0,0,0,.5); font-size: 12px; color: #cfcfcf; }
.dlg-title { position: relative; height: 37px; flex: none; padding-top: 3px; background: #e4e2de; border-radius: 8px 8px 0 0; border-bottom: 1px solid #555; display: flex; align-items: center; justify-content: center; color: #2f2f2f; font-weight: 700; font-size: 13px; }
.dlg-title b { position: absolute; right: 12px; top: 10px; font-size: 20px; line-height: 20px; color: #222; }
.dlg-head { height: 42px; flex: none; display: flex; padding: 3px 5px 0 4px; border-bottom: 1px solid #333; }
.dlg-ic { width: 23px; height: 24px; flex: none; color: #d8d8d8; }
.dlg-heading { margin-left: 6px; min-width: 0; flex: 1; }
.dlg-heading strong { display: block; font-size: 14px; line-height: 20px; margin-top: 3px; color: #dedede; }
.dlg-heading small { display: block; font-size: 10.500px; line-height: 13px; color: #c4c4c4; white-space: nowrap; }
.dlg-thumb { width: 34px; height: 16px; margin-top: 11px; flex: none; background: #bdbab6; border: 1px solid #000; }
.dlg-row { display: flex; align-items: center; padding: 0 6px; flex: none; }
.dlg-row label { font-size: 12.500px; }
.presets { height: 29px; margin-top: 7px; }
.presets label { width: 57px; }
.preset-combo { width: 243px; height: 30px; padding: 0 6px; }
.plus-ic { margin-left: 12px; color: #d0d0d0; }
.dlg-cfg { width: 13px; height: 13px; margin: 0 0 0 12px; }
.channel { height: 32px; margin-top: 9px; }
.channel label { width: 62px; font-weight: 700; }
.chan-combo { width: 79px; height: 32px; padding: 0 6px 0 11px; }
.hist-btns { display: flex; margin-left: auto; }
.hbtn { width: 26px; height: 32px; display: flex; align-items: center; justify-content: center; color: #c8c8c8; border-radius: 4px; }
.hbtn.on { background: #222; }
.hist-wrap { margin: 2px 7px 0 20px; flex: none; width: 343px; }
.ramp { height: 12px; margin-top: 2px; background: linear-gradient(90deg, #000, #fff); }
.handles { position: relative; height: 11px; border: 1px solid #3a3a3a; border-top: 0; }
.h1 { position: absolute; left: 165px; top: 0; }
.h2 { position: absolute; right: 0; top: 0; }
.spins { display: flex; justify-content: space-between; margin: 3px 7px 0 18px; flex: none; }
.spin { width: 49px; height: 24px; display: flex; align-items: center; justify-content: space-between; background: #333; padding-left: 4px; font-size: 12px; color: #d0d0d0; }
.arrows { width: 12px; height: 24px; background: #2b2b2b; position: relative; border-radius: 2px; }
.arrows::before, .arrows::after { content: ""; position: absolute; left: 2px; border: 4px solid transparent; }
.arrows::before { top: 0; border-bottom-color: #ddd; }
.arrows::after { bottom: 0; border-top-color: #ddd; }
.arrows.off::before { border-bottom-color: #666; }
.auto-row { display: flex; justify-content: flex-end; margin: 5px 6px 0 0; flex: none; }
.btn { background: #2f2f2f; border: 1px solid #232323; border-radius: 4px; padding: 0; font-size: 12px; color: #d0d0d0; }
.auto { width: 50px; height: 27px; background: #383838; }
.check-row { display: flex; align-items: center; padding-left: 8px; flex: none; height: 14px; font-size: 12px; }
.check-row.first { margin-top: 11px; }
.check-row.second { margin-top: 13px; padding-right: 6px; }
.cb { width: 12px; height: 12px; margin-right: 6px; flex: none; background: #222; border-radius: 3px; color: #fff; font: 10px/12px "DejaVu Sans", sans-serif; text-align: center; }
.cb.empty { margin-left: auto; width: 13px; height: 13px; background: #333; margin-right: 5px; }
.dim { color: #8c8c8c; }
.split { color: #b8b8b8; }
.actions { display: grid; grid-template-columns: repeat(4, 85px); gap: 6px; padding: 0 6px; margin-top: 15px; flex: none; }
.actions .btn { height: 30px; }
```
